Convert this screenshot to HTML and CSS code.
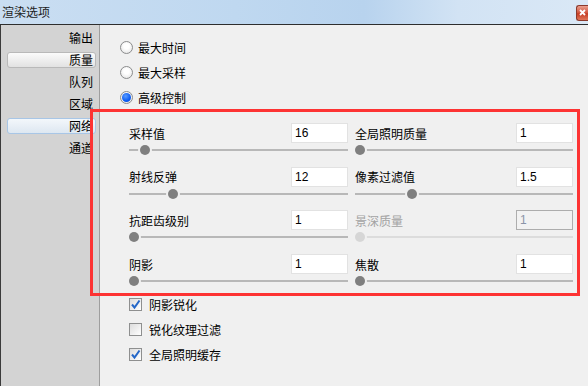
FILE: index.html
```html
<!DOCTYPE html>
<html lang="zh-CN">
<head>
    <meta charset="UTF-8">
    <meta name="viewport" content="width=device-width, initial-scale=1.0">
    <title>渲染选项</title>
    <link rel="stylesheet" href="styles.css">
</head>
<body>

    <div class="titlebar">
        <span class="title">渲染选项</span>
        <span class="btn-close">
            <svg width="7" height="7" viewBox="0 0 7 7"><path d="M1 1L6 6M6 1L1 6" stroke="#fff" stroke-width="1.8"/></svg>
        </span>
    </div>

    <div class="frame">
        <ul class="nav">
            <li>输出</li>
            <li class="selected">质量</li>
            <li>队列</li>
            <li>区域</li>
            <li class="hover">网络</li>
            <li>通道</li>
        </ul>

        <div class="content">
            <div class="mode-list">
                <div class="radio-row"><span class="radio"></span>最大时间</div>
                <div class="radio-row"><span class="radio"></span>最大采样</div>
                <div class="radio-row"><span class="radio checked"></span>高级控制</div>
            </div>

            <div class="params">
                <div class="param">
                    <div class="param-head"><span>采样值</span><input class="num" type="text" value="16"></div>
                    <div class="slider"><span class="thumb" style="left: 5%"></span></div>
                </div>
                <div class="param">
                    <div class="param-head"><span>全局照明质量</span><input class="num" type="text" value="1"></div>
                    <div class="slider"><span class="thumb" style="left: 0%"></span></div>
                </div>
                <div class="param">
                    <div class="param-head"><span>射线反弹</span><input class="num" type="text" value="12"></div>
                    <div class="slider"><span class="thumb" style="left: 17.8%"></span></div>
                </div>
                <div class="param">
                    <div class="param-head"><span>像素过滤值</span><input class="num" type="text" value="1.5"></div>
                    <div class="slider"><span class="thumb" style="left: 23.9%"></span></div>
                </div>
                <div class="param">
                    <div class="param-head"><span>抗距齿级别</span><input class="num" type="text" value="1"></div>
                    <div class="slider"><span class="thumb" style="left: 0%"></span></div>
                </div>
                <div class="param disabled">
                    <div class="param-head"><span>景深质量</span><input class="num" type="text" value="1" disabled></div>
                    <div class="slider"><span class="thumb" style="left: 0%"></span></div>
                </div>
                <div class="param">
                    <div class="param-head"><span>阴影</span><input class="num" type="text" value="1"></div>
                    <div class="slider"><span class="thumb" style="left: 0%"></span></div>
                </div>
                <div class="param">
                    <div class="param-head"><span>焦散</span><input class="num" type="text" value="1"></div>
                    <div class="slider"><span class="thumb" style="left: 0%"></span></div>
                </div>
            </div>

            <div class="options">
                <div class="check-row">
                    <span class="check"><svg width="13" height="13" viewBox="0 0 13 13"><path d="M3 6.5L5.5 9.5L10.5 2.5" fill="none" stroke="#2467c8" stroke-width="2"/></svg></span>阴影锐化
                </div>
                <div class="check-row"><span class="check"></span>锐化纹理过滤</div>
                <div class="check-row">
                    <span class="check"><svg width="13" height="13" viewBox="0 0 13 13"><path d="M3 6.5L5.5 9.5L10.5 2.5" fill="none" stroke="#2467c8" stroke-width="2"/></svg></span>全局照明缓存
                </div>
            </div>
        </div>
    </div>

    <!-- marca roja sobre el grupo de parametros -->
    <div class="mark"></div>

</body>
</html>
```

FILE: styles.css
```css
/* Ventana */
body {
    position: relative;
    margin: 0;
    width: 588px;
    height: 386px;
    overflow: hidden;
    background: #f0f0f0;
    font-family: "Noto Sans CJK SC", "Microsoft YaHei", sans-serif;
    font-size: 12px;
    color: #000;
}

.titlebar {
    display: flex;
    align-items: center;
    height: 24px;
    border-bottom: 1px solid #2e2e2e;
    background: linear-gradient(90deg, #cadef2 0%, #bfd8f0 40%, #b8d3ee 62%, #d2e3f4 78%, #dae8f6 100%);
}

.title {
    padding-left: 2px;
    line-height: 24px;
    color: #1c1c1c;
}

.btn-close {
    display: flex;
    align-items: center;
    justify-content: center;
    margin-left: auto;
    margin-top: 1px;
    width: 11px;
    height: 14px;
    border: 1px solid #8c3a2c;
    border-right: none;
    border-radius: 3px 0 0 3px;
    background: linear-gradient(#eba08f, #d0523a 50%, #c53b22 55%, #e07658);
}

.frame {
    display: flex;
    height: 361px;
    border-left: 1px solid #3a3a3a;
}

/* Menu lateral */
.nav {
    display: flex;
    flex-direction: column;
    gap: 8px;
    width: 89px;
    margin: 0;
    padding: 6px 3px 0 6px;
    list-style: none;
    background: #d3d3d3;
    border-right: 1px solid #9e9e9e;
}

    .nav li {
        height: 14px;
        line-height: 14px;
        padding-right: 2px;
        text-align: right;
        border: 1px solid transparent;
        border-radius: 3px;
        margin: -1px 0;
    }

    .nav li.selected {
        border-color: #b9b9b9;
        background: linear-gradient(#fbfbfb, #e2e2e2);
    }

    .nav li.hover {
        border-color: #a8c6e6;
        background: linear-gradient(#f3f7fb, #dde7f1);
    }

/* Contenido */
.content {
    flex: 1;
    padding: 10px 0 0 20px;
}

.mode-list {
    display: flex;
    flex-direction: column;
    gap: 1px;
}

.radio-row, .check-row {
    display: flex;
    align-items: center;
    height: 24px;
}

.radio {
    position: relative;
    box-sizing: border-box;
    width: 13px;
    height: 13px;
    margin-right: 5px;
    border: 1px solid #8b8c8d;
    border-radius: 50%;
    background: radial-gradient(circle at 50% 40%, #ffffff 30%, #dedede 100%);
}

    .radio.checked::after {
        content: "";
        position: absolute;
        left: 1px;
        top: 1px;
        width: 9px;
        height: 9px;
        border-radius: 50%;
        background: radial-gradient(circle at 40% 35%, #5a9cff 0%, #0a5bf3 60%, #0846c8 100%);
    }

.params {
    display: grid;
    grid-template-columns: 219px 218px;
    column-gap: 7px;
    row-gap: 11.7px;
    margin: 14px 0 0 9px;
}

.param-head {
    display: flex;
    align-items: center;
    justify-content: space-between;
    height: 20px;
}

.num {
    box-sizing: border-box;
    width: 57px;
    height: 20px;
    padding: 0 3px;
    border: 1px solid #e2e2e2;
    background: #fff;
    font-family: "Liberation Sans", Arial, sans-serif;
    font-size: 12px;
    color: #000;
    outline: none;
}

.slider {
    position: relative;
    height: 10px;
    margin-top: 2px;
}

    .slider::before {
        content: "";
        position: absolute;
        left: 0;
        right: 0;
        top: 4px;
        height: 2px;
        background: #b8b8b8;
    }

.thumb {
    position: absolute;
    top: 0;
    width: 10px;
    height: 10px;
    border-radius: 50%;
    background: #7f7f7f;
    box-shadow: 0 0 0 2px #f0f0f0;
}

.param.disabled .param-head span {
    color: #a3a3a3;
}

.param.disabled .num {
    border-color: #adadad;
    background: #f2f2f2;
    color: #8a94a8;
}

.param.disabled .slider::before {
    background: #dcdcdc;
}

.param.disabled .thumb {
    background: #d6d6d6;
}

.options {
    display: flex;
    flex-direction: column;
    gap: 1px;
    margin: 6px 0 0 9px;
}

.check {
    box-sizing: border-box;
    display: flex;
    width: 13px;
    height: 13px;
    margin-right: 7px;
    border: 1px solid #8e8f8f;
    background: linear-gradient(135deg, #dcdcdc, #ffffff);
}

    .check svg {
        margin: -1px;
    }

/* Marca roja */
.mark {
    position: absolute;
    left: 90px;
    top: 109px;
    width: 484px;
    height: 181px;
    border: 3px solid #fd3333;
}
```
